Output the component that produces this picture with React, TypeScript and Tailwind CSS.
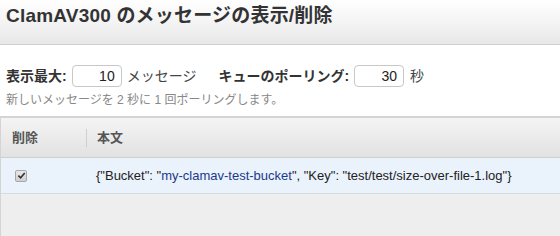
import React from "react";

export default function App() {
  const font = { fontFamily: '"Liberation Sans", "Noto Sans CJK JP", Arial, sans-serif' };
  return (
    <div className="w-[560px] h-[236px] overflow-hidden bg-white text-[#333]" style={font}>
      <div className="h-[45px] border-b border-[#cfcfcf] bg-gradient-to-b from-[#ffffff] to-[#e8e8e8] px-[6px] pt-[5px]">
        <h1 className="text-[19px] font-bold leading-[22px] text-[#333] tracking-[0.2px]">ClamAV300 のメッセージの表示/削除</h1>
      </div>
      <div className="pl-[6px] pt-[20px]">
        <div className="flex items-center h-[22px] text-[14px]">
          <span className="font-bold text-[#333]">表示最大:</span>
          <div className="ml-[5px] w-[50px] h-[22px] rounded-[4px] border border-[#c8c8c8] bg-white flex items-center justify-end pr-[6px] text-[14px] text-[#222]">10</div>
          <span className="ml-[5px] text-[#444]">メッセージ</span>
          <span className="ml-[22px] font-bold text-[#333]">キューのポーリング:</span>
          <div className="ml-[5px] w-[50px] h-[22px] rounded-[4px] border border-[#c8c8c8] bg-white flex items-center justify-end pr-[6px] text-[14px] text-[#222]">30</div>
          <span className="ml-[6px] text-[#444]">秒</span>
        </div>
        <div className="mt-[5px] text-[12px] leading-[16px] text-[#888]">新しいメッセージを 2 秒に 1 回ポーリングします。</div>
      </div>
      <div className="mt-[8px] border-t-2 border-l border-[#d4d4d4] bg-[#eeeeee] h-[200px]">
        <div className="flex items-center h-[40px] border-b border-[#cfcfcf] bg-gradient-to-b from-[#f4f4f4] to-[#e2e2e2] text-[13px] font-bold text-[#555]">
          <div className="w-[85px] pl-[11px]">削除</div>
          <div className="w-px h-[18px] bg-[#cfcfcf]"></div>
          <div className="pl-[10px]">本文</div>
        </div>
        <div className="flex items-center h-[36px] bg-[#eaf2fc] border-b border-[#d4dbe4] text-[13px] text-[#222]">
          <div className="w-[86px] pl-[14px] flex items-center">
            <div className="w-[12px] h-[12px] rounded-[2px] border border-[#a8a8a8] bg-gradient-to-b from-[#e8e8e8] to-[#cfcfcf] flex items-center justify-center">
              <svg width="9" height="9" viewBox="0 0 10 10"><path d="M1.5 5.2 L4 7.6 L8.6 2.2" stroke="#333" strokeWidth="1.8" fill="none" /></svg>
            </div>
          </div>
          <div className="pl-[9px] whitespace-nowrap">
            {'{"Bucket": "'}<span className="text-[#1a3a8a]">my-clamav-test-bucket</span>{'", "Key": "test/test/size-over-file-1.log"}'}
          </div>
        </div>
      </div>
    </div>
  );
}
